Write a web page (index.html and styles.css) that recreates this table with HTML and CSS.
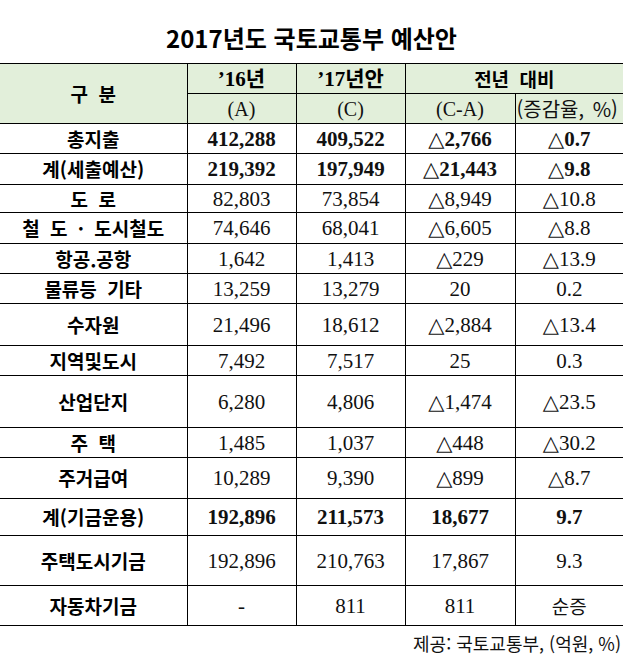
FILE: index.html
```html
<!DOCTYPE html>
<html lang="ko">
<head>
<meta charset="utf-8">
<link rel="stylesheet" href="styles.css">
</head>
<body>
<div class="page">
  <h1 class="title">2017년도 국토교통부 예산안</h1>
  <table class="budget">
    <colgroup>
      <col class="c0"><col class="c1"><col class="c2"><col class="c3"><col class="c4">
    </colgroup>
    <thead>
      <tr class="h30">
        <th class="lbl" rowspan="2">구 분</th>
        <th class="yr">’16년</th>
        <th class="yr">’17년안</th>
        <th class="lbl" colspan="2">전년 대비</th>
      </tr>
      <tr class="h30">
        <th class="sub">(A)</th>
        <th class="sub">(C)</th>
        <th class="sub">(C-A)</th>
        <th class="sub rate">(증감율, %)</th>
      </tr>
    </thead>
    <tbody>
      <tr class="h30 bold"><td class="lbl">총지출</td><td>412,288</td><td>409,522</td><td><span class="tri">△</span>2,766</td><td><span class="tri">△</span>0.7</td></tr>
      <tr class="h31 bold"><td class="lbl">계(세출예산)</td><td>219,392</td><td>197,949</td><td><span class="tri">△</span>21,443</td><td><span class="tri">△</span>9.8</td></tr>
      <tr class="h28"><td class="lbl">도 로</td><td>82,803</td><td>73,854</td><td><span class="tri">△</span>8,949</td><td><span class="tri">△</span>10.8</td></tr>
      <tr class="h31"><td class="lbl">철 도 · 도시철도</td><td>74,646</td><td>68,041</td><td><span class="tri">△</span>6,605</td><td><span class="tri">△</span>8.8</td></tr>
      <tr class="h30"><td class="lbl">항공.공항</td><td>1,642</td><td>1,413</td><td><span class="tri">△</span>229</td><td><span class="tri">△</span>13.9</td></tr>
      <tr class="h30"><td class="lbl">물류등 기타</td><td>13,259</td><td>13,279</td><td>20</td><td>0.2</td></tr>
      <tr class="h42"><td class="lbl">수자원</td><td>21,496</td><td>18,612</td><td><span class="tri">△</span>2,884</td><td><span class="tri">△</span>13.4</td></tr>
      <tr class="h30"><td class="lbl">지역및도시</td><td>7,492</td><td>7,517</td><td>25</td><td>0.3</td></tr>
      <tr class="h52"><td class="lbl">산업단지</td><td>6,280</td><td>4,806</td><td><span class="tri">△</span>1,474</td><td><span class="tri">△</span>23.5</td></tr>
      <tr class="h30"><td class="lbl">주 택</td><td>1,485</td><td>1,037</td><td><span class="tri">△</span>448</td><td><span class="tri">△</span>30.2</td></tr>
      <tr class="h41"><td class="lbl">주거급여</td><td>10,289</td><td>9,390</td><td><span class="tri">△</span>899</td><td><span class="tri">△</span>8.7</td></tr>
      <tr class="h37 bold"><td class="lbl">계(기금운용)</td><td>192,896</td><td>211,573</td><td>18,677</td><td>9.7</td></tr>
      <tr class="h50"><td class="lbl">주택도시기금</td><td>192,896</td><td>210,763</td><td>17,867</td><td>9.3</td></tr>
      <tr class="h40"><td class="lbl">자동차기금</td><td>-</td><td>811</td><td>811</td><td class="kr">순증</td></tr>
    </tbody>
  </table>
  <p class="source">제공: 국토교통부, (억원, %)</p>
</div>
</body>
</html>
```

FILE: styles.css
```css
html, body {
  margin: 0;
  padding: 0;
  background: #ffffff;
}

.page {
  width: 623px;
  color: #000;
}

.title {
  margin: 0;
  height: 63px;
  box-sizing: border-box;
  padding-top: 24px;
  font-family: "Noto Sans CJK KR", "Noto Sans", sans-serif;
  font-size: 24px;
  line-height: 28px;
  font-weight: 700;
  text-align: center;
}

.budget {
  width: 623px;
  border-collapse: collapse;
  table-layout: fixed;
  font-family: "Liberation Serif", "Noto Sans CJK KR", serif;
  font-size: 21px;
  color: #111;
}

.c0 { width: 187px; }
.c1 { width: 109px; }
.c2 { width: 109px; }
.c3 { width: 110px; }
.c4 { width: 108px; }

.budget th,
.budget td {
  border: 1px solid #000;
  padding: 0;
  text-align: center;
  vertical-align: middle;
  white-space: nowrap;
  line-height: 22px;
}

.budget tr > :first-child { border-left: none; }
.budget tr > :last-child { border-right: none; }
.budget thead tr:first-child > th:last-child { border-right: none; }

.budget thead th {
  background: #e2efda;
  font-weight: 400;
}

.budget .lbl {
  font-family: "Noto Sans CJK KR", "Noto Sans", sans-serif;
  font-weight: 700;
  font-size: 19px;
  word-spacing: 5px;
  color: #000;
}

.budget .yr {
  font-weight: 700;
  font-size: 21px;
  color: #000;
}

.budget .sub {
  font-size: 20px;
  font-weight: 400;
}

.budget .rate {
  text-align: left;
  padding-left: 1px;
  font-family: "Noto Sans CJK KR", "Noto Sans", sans-serif;
  font-size: 20px;
  word-spacing: 3px;
}

.budget .bold td { font-weight: 700; }

.tri {
  font-family: "DejaVu Sans", "Noto Sans CJK KR", sans-serif;
  font-size: 21px;
  font-weight: 400;
}

.budget .kr {
  font-family: "Noto Sans CJK KR", sans-serif;
  font-size: 19px;
}

.h28 td, .h28 th { height: 27px; }
.h30 td, .h30 th { height: 29px; }
.h31 td, .h31 th { height: 30px; }
.h37 td { height: 36px; }
.h40 td { height: 39px; }
.h41 td { height: 40px; }
.h42 td { height: 41px; }
.h50 td { height: 49px; }
.h52 td { height: 51px; }

.source {
  margin: 0;
  padding-top: 6px;
  padding-right: 2px;
  text-align: right;
  font-family: "Noto Sans CJK KR", "Noto Sans", sans-serif;
  font-size: 18px;
  line-height: 22px;
  color: #111;
}
```
